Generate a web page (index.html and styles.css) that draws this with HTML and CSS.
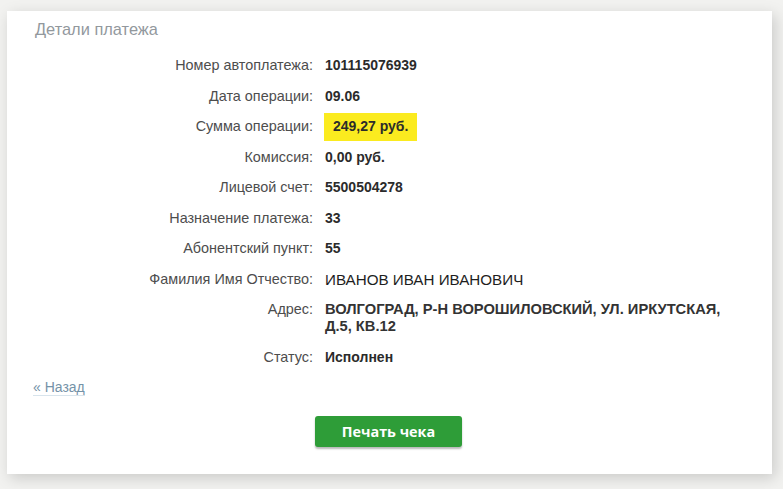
FILE: index.html
```html
<!DOCTYPE html>
<html lang="ru">
<head>
<meta charset="utf-8">
<title>Детали платежа</title>
<link rel="stylesheet" href="styles.css">
</head>
<body>
<div class="card">
  <h1 class="title">Детали платежа</h1>
  <dl class="details">
    <dt>Номер автоплатежа:</dt><dd class="b">101115076939</dd>
    <dt>Дата операции:</dt><dd class="b">09.06</dd>
    <dt>Сумма операции:</dt><dd class="b"><span class="hl">249,27 руб.</span></dd>
    <dt>Комиссия:</dt><dd class="b">0,00 руб.</dd>
    <dt>Лицевой счет:</dt><dd class="b">5500504278</dd>
    <dt>Назначение платежа:</dt><dd class="b">33</dd>
    <dt>Абонентский пункт:</dt><dd class="b">55</dd>
    <dt>Фамилия Имя Отчество:</dt><dd class="big">ИВАНОВ ИВАН ИВАНОВИЧ</dd>
    <dt>Адрес:</dt><dd class="big addr">ВОЛГОГРАД, Р-Н ВОРОШИЛОВСКИЙ, УЛ. ИРКУТСКАЯ,<br>Д.5, КВ.12</dd>
    <dt>Статус:</dt><dd class="b">Исполнен</dd>
  </dl>
  <a class="back" href="#">« Назад</a>
  <div class="actions">
    <button class="print" type="button">Печать чека</button>
  </div>
</div>
</body>
</html>
```

FILE: styles.css
```css
html, body {
  margin: 0;
  padding: 0;
}
body {
  background: #f2f2f0;
  font-family: "Liberation Sans", Arial, sans-serif;
  width: 783px;
  height: 489px;
  overflow: hidden;
}
.card {
  box-sizing: border-box;
  width: 765px;
  height: 463px;
  margin: 11px 0 0 7px;
  background: #fff;
  box-shadow: 3px 4px 14px rgba(0, 0, 0, 0.17);
  padding: 9px 0 0 27px;
  display: flex;
  flex-direction: column;
}
.title {
  margin: 0 0 0 1px;
  font-size: 16.4px;
  line-height: 18px;
  font-weight: normal;
  color: #92989d;
}
.details {
  margin: 19px 0 0 0;
  display: grid;
  grid-template-columns: 279px 1fr;
  column-gap: 12px;
  row-gap: 13.5px;
  font-size: 14px;
  line-height: 17px;
}
.details dt {
  text-align: right;
  color: #4d4d4d;
  font-size: 14.4px;
}
.details dd {
  margin: 0;
  color: #222;
}
.details dd.b {
  font-weight: bold;
  color: #2b2b2b;
}
.details dd.big {
  font-size: 15.2px;
  color: #1e1e1e;
}
.details dd.addr {
  font-weight: bold;
  font-size: 14.7px;
  line-height: 17px;
  color: #333;
}
.hl {
  display: inline-block;
  background: #fbeb1f;
  padding: 5.5px 9px;
  margin: -5.5px 0 -5.5px -1px;
}
.back {
  align-self: flex-start;
  margin: 13px 0 0 -1px;
  font-size: 14px;
  line-height: 16px;
  color: #7592a8;
  text-decoration: none;
  border-bottom: 1px solid #d8e4ec;
}
.actions {
  display: flex;
  justify-content: center;
  margin: 20px 0 0 -29px;
}
.print {
  width: 147px;
  height: 31px;
  border: none;
  border-radius: 3px;
  background: #2e9d38;
  color: #fff;
  font-family: "Open Sans", "Liberation Sans", sans-serif;
  font-weight: bold;
  font-size: 14.4px;
  box-shadow: 0 2px 2px rgba(0, 0, 0, 0.28);
  cursor: pointer;
}
```
